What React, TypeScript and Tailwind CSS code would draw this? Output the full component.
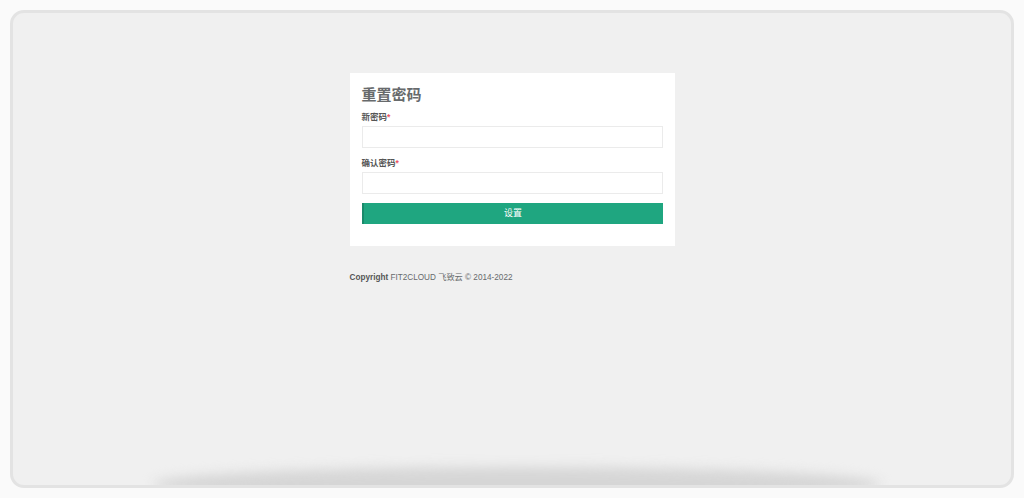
const font = "font-['Liberation_Sans','Noto_Sans_CJK_SC',sans-serif]";

export default function App() {
  return (
    <div className={`h-[498px] w-full bg-[#fafafa] p-[10px] ${font}`}>
      <div className="relative h-full overflow-hidden rounded-[14px] border-[3px] border-[#e3e3e3] bg-[#f0f0f0]">
        {/* bottom shade */}
        <div className="absolute bottom-[-16px] left-[140px] right-[130px] h-[34px] rounded-[50%] bg-[#d6d6d6] blur-[6px]" />

        <div className="relative mx-auto mt-[60px] w-[325px]">
          <div className="bg-white px-[12px] pb-[22px] pt-[12px]">
            <h1 className="mb-[6px] text-[15px] font-bold leading-[20px] text-[#676a6c]">重置密码</h1>

            <label className="block text-[8.5px] font-bold leading-[12px] text-[#555]">
              新密码<span className="text-[#ed5565]">*</span>
            </label>
            <input type="password" className="mt-[3px] block h-[22px] w-full border border-[#ebebeb] bg-white outline-none" />

            <label className="mt-[9px] block text-[8.5px] font-bold leading-[12px] text-[#555]">
              确认密码<span className="text-[#ed5565]">*</span>
            </label>
            <input type="password" className="mt-[3px] block h-[22px] w-full border border-[#ebebeb] bg-white outline-none" />

            <button className="mt-[9px] block h-[21px] w-full border-l-2 border-[#1a8a6b] bg-[#1fa680] text-[9px] leading-[21px] text-white">
              设置
            </button>
          </div>

          <p className="mt-[26px] text-[8.2px] leading-[12px] text-[#676a6c]">
            <span className="font-bold text-[#555]">Copyright</span> FIT2CLOUD 飞致云 © 2014-2022
          </p>
        </div>
      </div>
    </div>
  );
}
